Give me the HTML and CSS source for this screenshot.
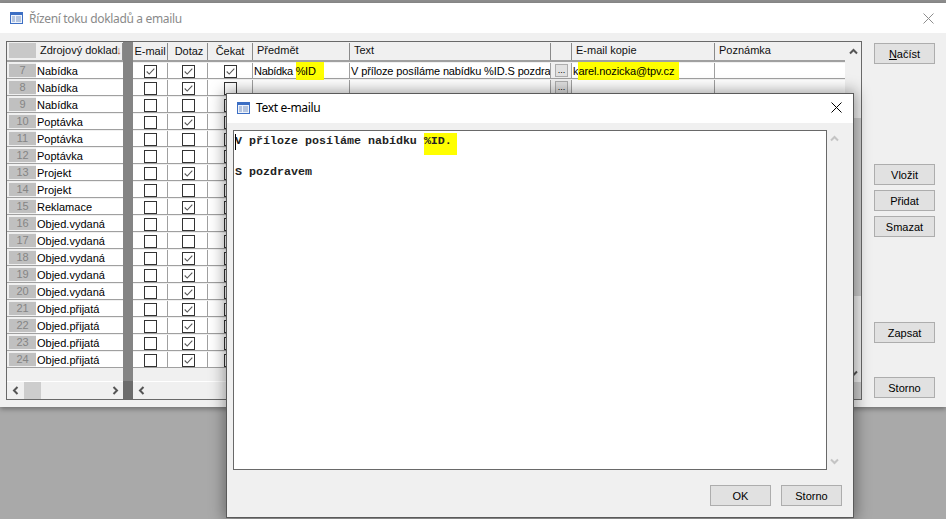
FILE: index.html
```html
<!DOCTYPE html>
<html lang="cs">
<head>
<meta charset="utf-8">
<title>Řízení toku dokladů a emailu</title>
<link rel="stylesheet" href="styles.css">
</head>
<body>
<svg class="defs" width="0" height="0" aria-hidden="true">
  <symbol id="tick" viewBox="0 0 13 13"><path d="M2 6.5 5 9.5 11 3" fill="none" stroke="#555" stroke-width="1.3"/></symbol>
  <symbol id="winicon" viewBox="0 0 13 12">
    <rect x="0" y="0" width="13" height="12" fill="#3d6fc4"/>
    <rect x="1" y="3" width="11" height="8" fill="#eef3fb"/>
    <path d="M2 5h3M6 5h5M2 7h3M6 7h5M2 9h3M6 9h5" stroke="#7d97c4" stroke-width="1"/>
  </symbol>
  <symbol id="close" viewBox="0 0 11 11"><path d="M.5.5 10.5 10.5M10.5.5.5 10.5" fill="none" stroke="currentColor" stroke-width="1"/></symbol>
  <symbol id="chev-l" viewBox="0 0 7 9"><path d="M5.5 1 2 4.5 5.5 8" fill="none" stroke="currentColor" stroke-width="2"/></symbol>
  <symbol id="chev-r" viewBox="0 0 7 9"><path d="M1.5 1 5 4.5 1.5 8" fill="none" stroke="currentColor" stroke-width="2"/></symbol>
  <symbol id="chev-u" viewBox="0 0 9 7"><path d="M1 5.5 4.5 2 8 5.5" fill="none" stroke="currentColor" stroke-width="2"/></symbol>
  <symbol id="chev-d" viewBox="0 0 9 7"><path d="M1 1.5 4.5 5 8 1.5" fill="none" stroke="currentColor" stroke-width="2"/></symbol>
</svg>

<div class="window">
  <header class="titlebar">
    <svg class="winicon"><use href="#winicon"/></svg>
    <span class="title">Řízení toku dokladů a emailu</span>
    <svg class="closeicon"><use href="#close"/></svg>
  </header>
  <div class="content">
    <div class="grid">
      <div class="pane frozen">
        <div class="row head">
          <div class="c sel"></div>
          <div class="c src">Zdrojový doklad <span class="sort">↓</span></div>
        </div>
        <div class="rows">
          <div class="row"><div class="c sel"><b>7</b></div><div class="c src">Nabídka</div></div>
          <div class="row"><div class="c sel"><b>8</b></div><div class="c src">Nabídka</div></div>
          <div class="row"><div class="c sel"><b>9</b></div><div class="c src">Nabídka</div></div>
          <div class="row"><div class="c sel"><b>10</b></div><div class="c src">Poptávka</div></div>
          <div class="row"><div class="c sel"><b>11</b></div><div class="c src">Poptávka</div></div>
          <div class="row"><div class="c sel"><b>12</b></div><div class="c src">Poptávka</div></div>
          <div class="row"><div class="c sel"><b>13</b></div><div class="c src">Projekt</div></div>
          <div class="row"><div class="c sel"><b>14</b></div><div class="c src">Projekt</div></div>
          <div class="row"><div class="c sel"><b>15</b></div><div class="c src">Reklamace</div></div>
          <div class="row"><div class="c sel"><b>16</b></div><div class="c src">Objed.vydaná</div></div>
          <div class="row"><div class="c sel"><b>17</b></div><div class="c src">Objed.vydaná</div></div>
          <div class="row"><div class="c sel"><b>18</b></div><div class="c src">Objed.vydaná</div></div>
          <div class="row"><div class="c sel"><b>19</b></div><div class="c src">Objed.vydaná</div></div>
          <div class="row"><div class="c sel"><b>20</b></div><div class="c src">Objed.vydaná</div></div>
          <div class="row"><div class="c sel"><b>21</b></div><div class="c src">Objed.přijatá</div></div>
          <div class="row"><div class="c sel"><b>22</b></div><div class="c src">Objed.přijatá</div></div>
          <div class="row"><div class="c sel"><b>23</b></div><div class="c src">Objed.přijatá</div></div>
          <div class="row"><div class="c sel"><b>24</b></div><div class="c src">Objed.přijatá</div></div>
        </div>
        <div class="hscroll">
          <svg class="arrow al"><use href="#chev-l"/></svg>
          <span class="hthumb"></span>
          <svg class="arrow ar"><use href="#chev-r"/></svg>
        </div>
      </div>
      <div class="splitter"><span class="splitter-end"></span></div>
      <div class="pane scrolled">
        <div class="row head">
          <div class="c w1 mid">E-mail</div><div class="c w2 mid">Dotaz</div><div class="c w3 mid">Čekat</div>
          <div class="c w4">Předmět</div><div class="c w5">Text</div><div class="c w6"></div><div class="c w7">E-mail kopie</div><div class="c w8">Poznámka</div>
        </div>
        <div class="rows">
          <div class="row">
            <div class="c w1 mid"><span class="cb"><svg><use href="#tick"/></svg></span></div>
            <div class="c w2 mid"><span class="cb"><svg><use href="#tick"/></svg></span></div>
            <div class="c w3 mid"><span class="cb"><svg><use href="#tick"/></svg></span></div>
            <div class="c w4 open">Nabídka <mark class="hl-id">%ID</mark></div>
            <div class="c w5">V příloze posíláme nabídku %ID.S pozdravem</div>
            <div class="c w6"><span class="dots">...</span></div>
            <div class="c w7 open">k<mark class="hl-mail">arel.nozicka@tpv.cz</mark></div>
            <div class="c w8"></div>
          </div>
          <div class="row">
            <div class="c w1 mid"><span class="cb"></span></div>
            <div class="c w2 mid"><span class="cb"><svg><use href="#tick"/></svg></span></div>
            <div class="c w3 mid"><span class="cb"></span></div>
            <div class="c w4"></div><div class="c w5"></div>
            <div class="c w6"><span class="dots">...</span></div>
            <div class="c w7"></div><div class="c w8"></div>
          </div>
          <div class="row"><div class="c w1 mid"><span class="cb"></span></div><div class="c w2 mid"><span class="cb"></span></div><div class="c w3 mid"><span class="cb"></span></div></div>
          <div class="row"><div class="c w1 mid"><span class="cb"></span></div><div class="c w2 mid"><span class="cb"><svg><use href="#tick"/></svg></span></div><div class="c w3 mid"><span class="cb"></span></div></div>
          <div class="row"><div class="c w1 mid"><span class="cb"></span></div><div class="c w2 mid"><span class="cb"></span></div><div class="c w3 mid"><span class="cb"></span></div></div>
          <div class="row"><div class="c w1 mid"><span class="cb"></span></div><div class="c w2 mid"><span class="cb"></span></div><div class="c w3 mid"><span class="cb"></span></div></div>
          <div class="row"><div class="c w1 mid"><span class="cb"></span></div><div class="c w2 mid"><span class="cb"><svg><use href="#tick"/></svg></span></div><div class="c w3 mid"><span class="cb"></span></div></div>
          <div class="row"><div class="c w1 mid"><span class="cb"></span></div><div class="c w2 mid"><span class="cb"></span></div><div class="c w3 mid"><span class="cb"></span></div></div>
          <div class="row"><div class="c w1 mid"><span class="cb"></span></div><div class="c w2 mid"><span class="cb"><svg><use href="#tick"/></svg></span></div><div class="c w3 mid"><span class="cb"></span></div></div>
          <div class="row"><div class="c w1 mid"><span class="cb"></span></div><div class="c w2 mid"><span class="cb"></span></div><div class="c w3 mid"><span class="cb"></span></div></div>
          <div class="row"><div class="c w1 mid"><span class="cb"></span></div><div class="c w2 mid"><span class="cb"></span></div><div class="c w3 mid"><span class="cb"></span></div></div>
          <div class="row"><div class="c w1 mid"><span class="cb"></span></div><div class="c w2 mid"><span class="cb"><svg><use href="#tick"/></svg></span></div><div class="c w3 mid"><span class="cb"></span></div></div>
          <div class="row"><div class="c w1 mid"><span class="cb"></span></div><div class="c w2 mid"><span class="cb"><svg><use href="#tick"/></svg></span></div><div class="c w3 mid"><span class="cb"></span></div></div>
          <div class="row"><div class="c w1 mid"><span class="cb"></span></div><div class="c w2 mid"><span class="cb"><svg><use href="#tick"/></svg></span></div><div class="c w3 mid"><span class="cb"></span></div></div>
          <div class="row"><div class="c w1 mid"><span class="cb"></span></div><div class="c w2 mid"><span class="cb"><svg><use href="#tick"/></svg></span></div><div class="c w3 mid"><span class="cb"></span></div></div>
          <div class="row"><div class="c w1 mid"><span class="cb"></span></div><div class="c w2 mid"><span class="cb"><svg><use href="#tick"/></svg></span></div><div class="c w3 mid"><span class="cb"></span></div></div>
          <div class="row"><div class="c w1 mid"><span class="cb"></span></div><div class="c w2 mid"><span class="cb"><svg><use href="#tick"/></svg></span></div><div class="c w3 mid"><span class="cb"></span></div></div>
          <div class="row"><div class="c w1 mid"><span class="cb"></span></div><div class="c w2 mid"><span class="cb"><svg><use href="#tick"/></svg></span></div><div class="c w3 mid"><span class="cb"></span></div></div>
        </div>
        <div class="hscroll">
          <svg class="arrow al2"><use href="#chev-l"/></svg>
        </div>
      </div>
      <div class="vscroll">
        <svg class="arrow-v"><use href="#chev-u"/></svg>
        <span class="vthumb"></span>
        <svg class="arrow-v"><use href="#chev-d"/></svg>
        <span class="corner"></span>
      </div>
    </div>
    <div class="actions">
      <button class="btn b-load"><u>N</u>ačíst</button>
      <button class="btn b-insert">Vložit</button>
      <button class="btn b-add">Přidat</button>
      <button class="btn b-del">Smazat</button>
      <button class="btn b-save">Zapsat</button>
      <button class="btn b-cancel">Storno</button>
    </div>
  </div>
</div>

<div class="dialog">
  <header class="titlebar dlg-title">
    <svg class="winicon"><use href="#winicon"/></svg>
    <span class="title active">Text e-mailu</span>
    <svg class="closeicon dark"><use href="#close"/></svg>
  </header>
  <div class="dlg-body">
    <div class="editor-row">
      <div class="editor">
        <p class="line"><span class="caret"></span>V příloze posíláme nabídku <mark class="hl-dlg">%ID.</mark></p>
        <p class="line">&nbsp;</p>
        <p class="line">S pozdravem</p>
      </div>
      <div class="editor-scroll">
        <svg class="arrow-v"><use href="#chev-u"/></svg>
        <svg class="arrow-v"><use href="#chev-d"/></svg>
      </div>
    </div>
    <div class="dlg-actions">
      <button class="btn">OK</button>
      <button class="btn">Storno</button>
    </div>
  </div>
</div>
</body>
</html>
```
FILE: styles.css
```css
* { box-sizing: border-box; }
html, body { margin: 0; height: 100%; }
body {
  width: 946px;
  height: 519px;
  overflow: hidden;
  position: relative;
  padding-top: 3px;
  background: linear-gradient(#8e8e8e 0 3px, #a9a9a9 3px);
  font: 11px "Liberation Sans", Arial, sans-serif;
  color: #000;
}
.defs { position: absolute; }

.window {
  height: 404px;
  background: #f0f0f0;
  display: flex;
  flex-direction: column;
  box-shadow: 0 2px 5px rgba(0, 0, 0, .35);
}
.titlebar {
  height: 30px;
  flex: none;
  background: #fff;
  display: flex;
  align-items: center;
  padding-left: 10px;
}
.winicon { width: 13px; height: 12px; margin-right: 6px; flex: none; }
.title { font: 12px "Noto Sans", sans-serif; letter-spacing: -.33px; color: #8a8a8a; }
.title.active { color: #000; }
.closeicon { width: 11px; height: 11px; margin-left: auto; margin-right: 12px; color: #8d8d8d; }
.closeicon.dark { color: #000; margin-right: 11px; }

.content {
  flex: 1;
  display: flex;
  align-items: flex-start;
  padding: 8px 11px 0 6px;
}

.grid {
  width: 856px;
  height: 359px;
  flex: none;
  display: flex;
  border: 1px solid #696969;
  background: #f0f0f0;
}
.pane { display: flex; flex-direction: column; overflow: hidden; }
.frozen { width: 116px; flex: none; }
.scrolled { width: 712px; flex: none; }

.row { display: flex; height: 17px; flex: none; padding-top: 1px; }
.rows .row { border-bottom: 1px solid #a0a0a0; }
.rows { flex: 1; border-top: 2px solid #a0a0a0; }
.head { height: 18px; padding: 1px 0 0; background: #f0f0f0; color: #111; }
.head .c { background: #f0f0f0; border-right: 1px solid #8a8a8a; padding: 0 4px; line-height: 15px; }

.c {
  height: 100%;
  background: #fff;
  border-right: 1px solid #a0a0a0;
  line-height: 17px;
  white-space: nowrap;
  overflow: hidden;
  padding-left: 1px;
  flex: none;
}
.open { overflow: visible; }
.mid { display: flex; justify-content: center; align-items: flex-start; padding: 2px 0 0; }
.head .mid { padding: 0; align-items: center; }

.sel { width: 29px; background: #f0f0f0; padding: 0 0 0 2px; border-right: 0; }
.sel b {
  display: block;
  height: 13px;
  margin-top: 1px;
  background: #c0c0c0;
  color: #858585;
  font-weight: normal;
  font-size: 11px;
  line-height: 13px;
  text-align: center;
}
.head .sel { width: 27px; margin-left: 2px; height: 15px; background: #c8c8c8; padding: 0; border-right: 0; }
.src { width: 87px; border-right: 0; }
.sort { color: #c4502e; margin-left: -4.5px; }

.w1 { width: 35px; }
.w2 { width: 40px; padding-left: 2px; }
.head .w2 { padding-left: 3px; }
.w3 { width: 45px; }
.w4 { width: 97px; letter-spacing: -.3px; }
.head .w4 { letter-spacing: 0; }
.w5 { width: 201px; letter-spacing: -.12px; }
.head .w5 { letter-spacing: 0; }
.w6 { width: 21px; background: #f0f0f0; }
.w7 { width: 143px; letter-spacing: -.1px; }
.head .w7 { letter-spacing: 0; }
.w8 { width: 130px; border-right: 0; }
.head .w8 { border-right: 0; }

.cb {
  width: 13px;
  height: 13px;
  border: 1px solid #333;
  background: #fff;
  display: block;
}
.cb svg { width: 11px; height: 11px; display: block; }

.dots {
  display: block;
  width: 13px;
  height: 13px;
  margin: 1px auto 0;
  border: 1px solid #adadad;
  background: #e1e1e1;
  font-size: 9px;
  line-height: 10px;
  text-align: center;
}

mark { background: #ffff00; color: inherit; }
.hl-id { padding: 3px 8px 4px 0; }
.hl-mail { padding: 3px 5px 4px 0; }

.hscroll {
  height: 18px;
  flex: none;
  margin-top: auto;
  background: #f0f0f0;
  border-top: 1px solid #fff;
  position: relative;
  display: flex;
  align-items: center;
  color: #555;
}
.arrow { width: 7px; height: 9px; flex: none; }
.al { margin-left: 5px; }
.hthumb { width: 17px; height: 17px; margin-left: 5px; background: #cdcdcd; }
.ar { margin-left: auto; margin-right: 4px; }
.al2 { margin-left: 5px; }

.splitter {
  width: 10px;
  flex: none;
  background: #848484;
  display: flex;
  align-items: flex-end;
}
.splitter-end { display: block; width: 100%; height: 18px; background: #6c6c6c; }

.vscroll {
  flex: 1;
  background: #f0f0f0;
  display: flex;
  flex-direction: column;
  align-items: center;
  color: #555;
  padding-top: 6px;
}
.arrow-v { width: 9px; height: 7px; flex: none; }
.vthumb { width: 100%; height: 178px; margin-top: 63px; background: #cdcdcd; margin-bottom: 74px; }
.corner { width: 100%; height: 17px; margin-top: auto; background: #cdcdcd; }

.actions { flex: none; display: flex; flex-direction: column; margin-left: 12px; }
.btn {
  width: 61px;
  height: 21px;
  padding: 0;
  background: #e1e1e1;
  border: 1px solid #adadad;
  font: 11px "Liberation Sans", Arial, sans-serif;
  color: #000;
}
.b-load { margin-top: 2px; }
.b-insert { margin-top: 100px; }
.b-add, .b-del { margin-top: 5px; }
.b-save { margin-top: 85px; }
.b-cancel { margin-top: 34px; }

.dialog {
  position: absolute;
  left: 226px;
  top: 93px;
  width: 628px;
  height: 425px;
  background: #f0f0f0;
  border: 1px solid #5a5a5a;
  display: flex;
  flex-direction: column;
  box-shadow: 0 0 14px 2px rgba(0, 0, 0, .38);
}
.dlg-title { height: 29px; padding: 0 0 2px 10px; }
.dlg-body { flex: 1; display: flex; flex-direction: column; padding: 7px 11px 11px 6px; }
.editor-row { flex: 1; display: flex; align-items: flex-start; }
.editor {
  width: 594px;
  height: 340px;
  background: #fff;
  border: 1px solid #696969;
  padding: 3px 0 0 1px;
  font: bold 11.67px/15.5px "Liberation Mono", "Courier New", monospace;
  color: #222;
}
.line { margin: 0; position: relative; white-space: pre; }
.caret { position: absolute; left: 0; top: 0; width: 1px; height: 16px; background: #000; }
.hl-dlg { padding: 1px 5px 7px 0; }
.editor-scroll {
  flex: 1;
  height: 340px;
  display: flex;
  flex-direction: column;
  justify-content: space-between;
  align-items: center;
  color: #c4c4c4;
  padding: 5px 0 5px;
}
.dlg-actions { display: flex; justify-content: flex-end; gap: 10px; }
```
